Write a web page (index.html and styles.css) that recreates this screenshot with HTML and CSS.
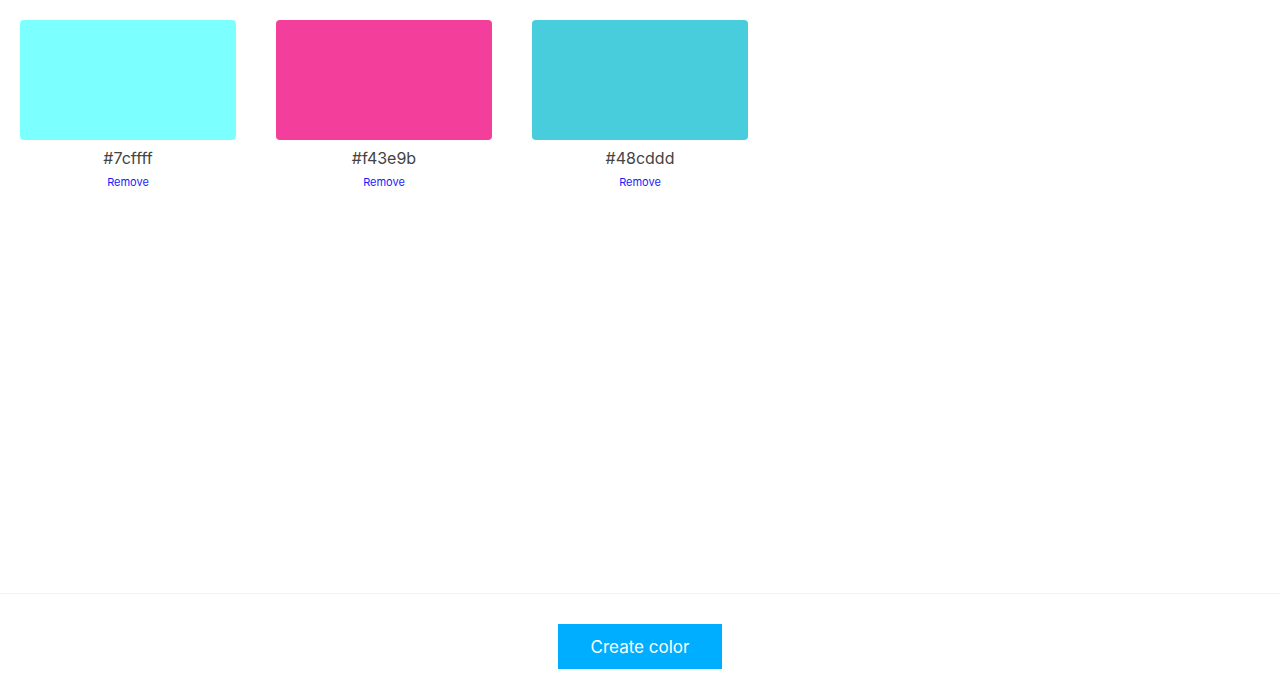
FILE: index.html
```html
<!DOCTYPE html>
<html>
<head>
<meta charset="utf-8">
<link rel="stylesheet" href="styles.css">
</head>
<body>
<div class="page">
  <main class="colors">
    <div class="card">
      <div class="swatch" style="background:#7cffff"></div>
      <div class="hex">#7cffff</div>
      <a class="remove" href="#">Remove</a>
    </div>
    <div class="card">
      <div class="swatch" style="background:#f43e9b"></div>
      <div class="hex">#f43e9b</div>
      <a class="remove" href="#">Remove</a>
    </div>
    <div class="card">
      <div class="swatch" style="background:#48cddd"></div>
      <div class="hex">#48cddd</div>
      <a class="remove" href="#">Remove</a>
    </div>
  </main>
  <footer class="footer">
    <button class="create">Create color</button>
  </footer>
</div>
</body>
</html>
```
FILE: styles.css
```css
html, body {
  margin: 0;
  padding: 0;
  background: #fff;
  font-family: Inter, "Noto Sans", "Liberation Sans", sans-serif;
}
.page {
  height: 100vh;
  display: flex;
  flex-direction: column;
}
.colors {
  flex: 1;
  display: flex;
  align-items: flex-start;
  gap: 40px;
  padding: 20px;
}
.card {
  width: 216px;
  display: flex;
  flex-direction: column;
  align-items: center;
}
.swatch {
  width: 216px;
  height: 120px;
  border-radius: 4px;
}
.hex {
  margin-top: 8px;
  font-size: 16px;
  line-height: 20px;
  color: #444;
}
.remove {
  margin-top: 7px;
  font-size: 11px;
  line-height: 14px;
  color: #1a1aff;
  text-decoration: none;
}
.footer {
  border-top: 1px solid #f2f2f2;
  height: 106px;
  display: flex;
  justify-content: center;
  padding-top: 30px;
  box-sizing: border-box;
}
.create {
  width: 164px;
  height: 45px;
  background: #00aeff;
  color: #fff;
  border: none;
  font-family: inherit;
  font-size: 17px;
  cursor: pointer;
}
```
